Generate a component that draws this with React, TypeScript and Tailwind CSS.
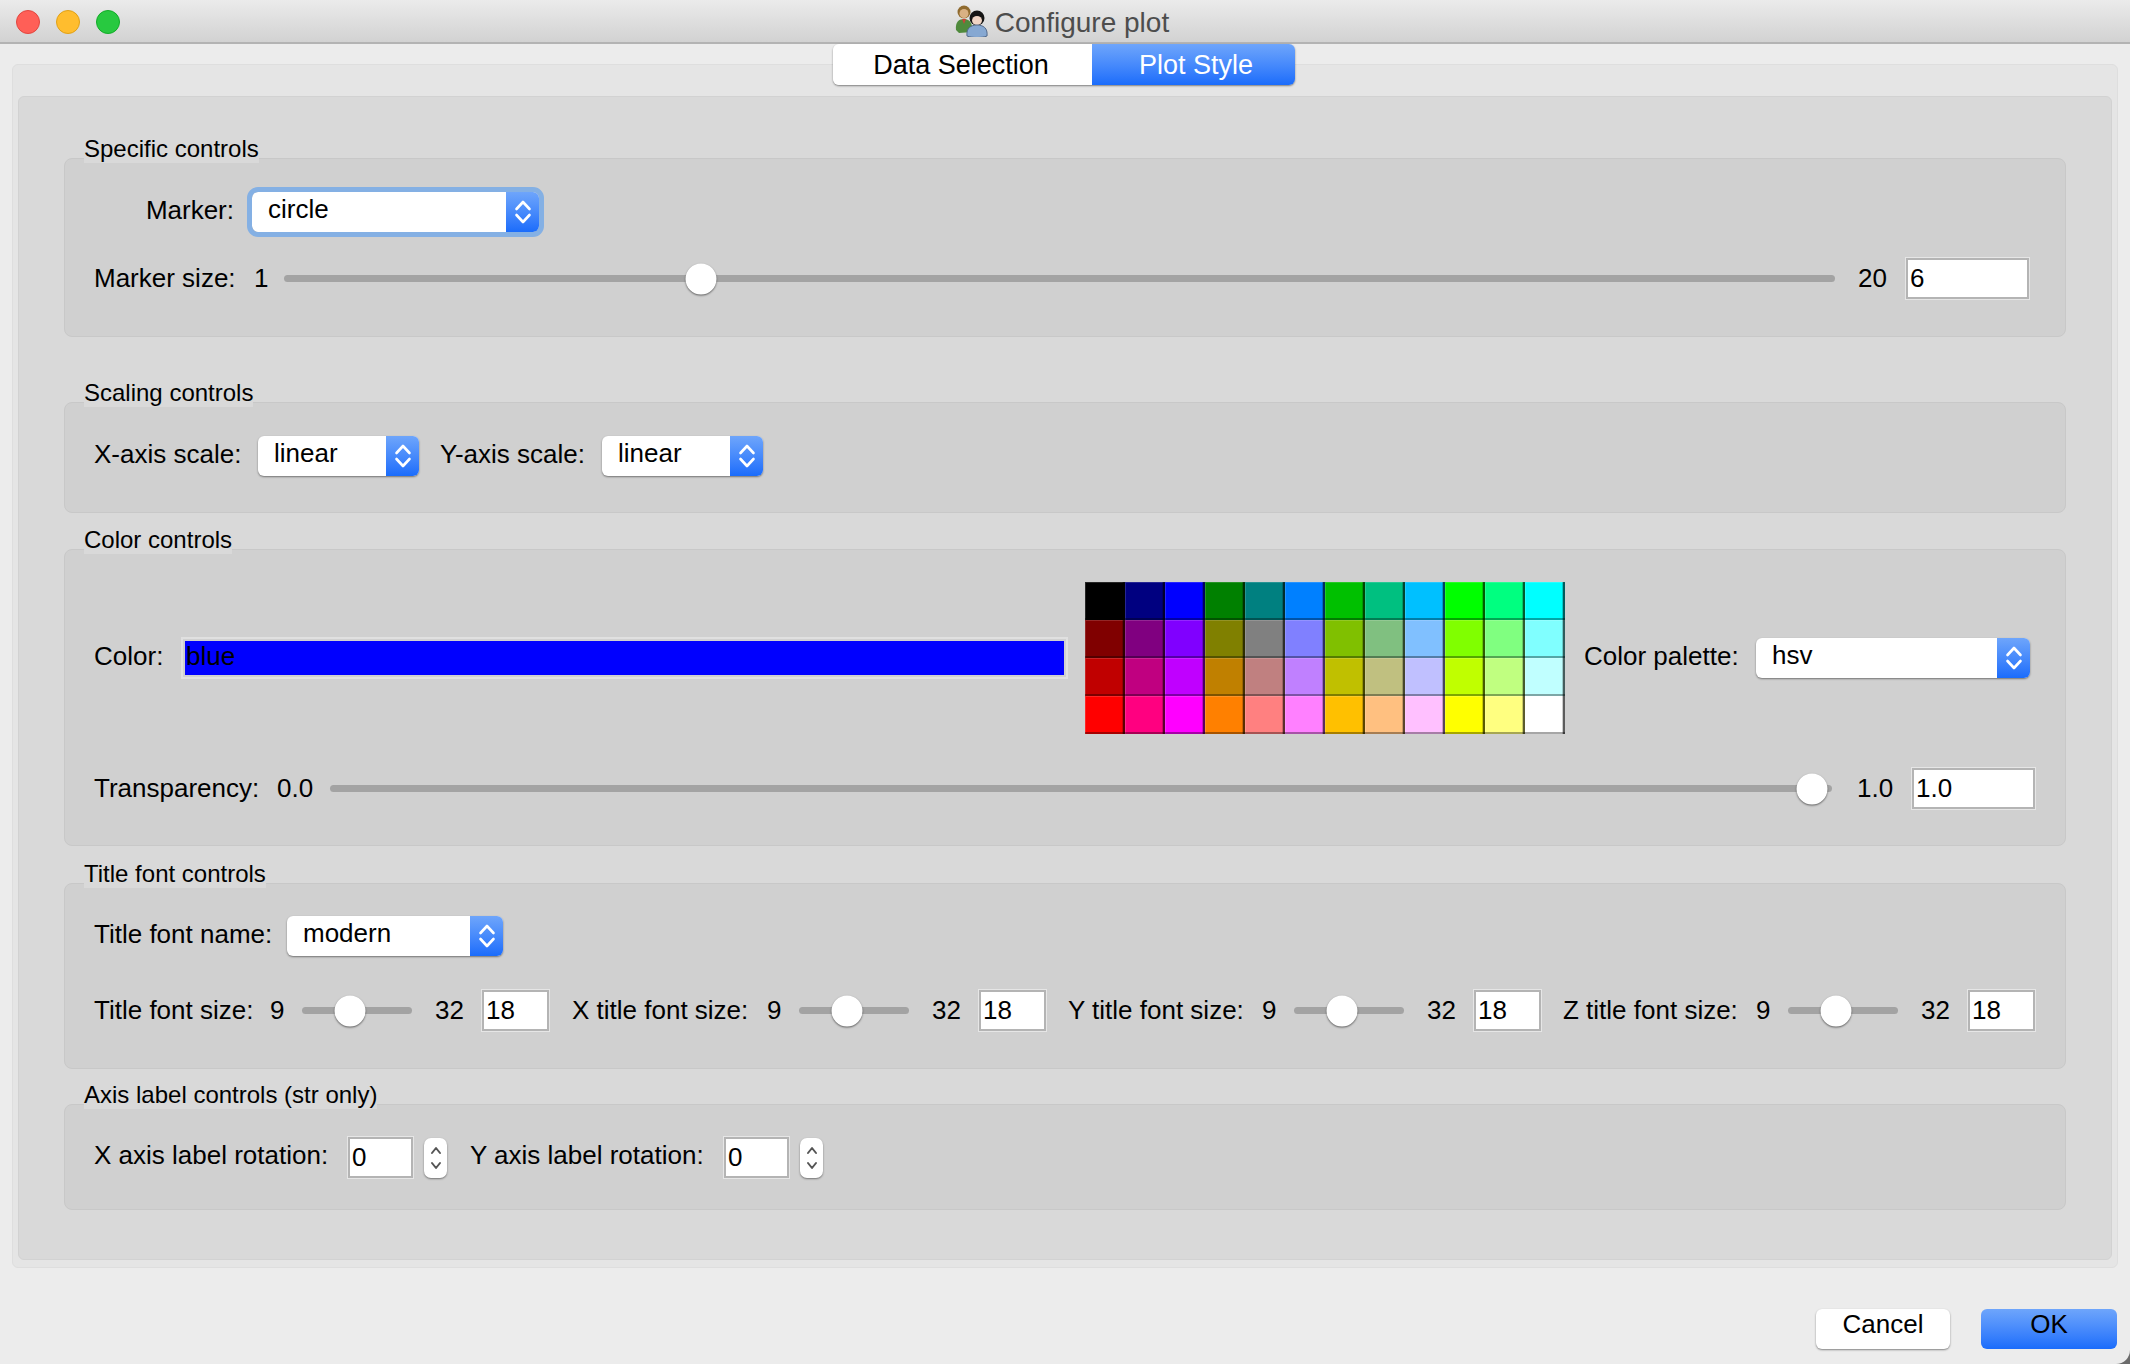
import React from 'react';

const PALETTE = [
  ['#000000', '#000080', '#0000ff', '#008000', '#008080', '#0080ff', '#00c000', '#00c080', '#00c0ff', '#00ff00', '#00ff80', '#00ffff'],
  ['#800000', '#800080', '#8000ff', '#808000', '#808080', '#8080ff', '#80c000', '#80c080', '#80c0ff', '#80ff00', '#80ff80', '#80ffff'],
  ['#c00000', '#c00080', '#c000ff', '#c08000', '#c08080', '#c080ff', '#c0c000', '#c0c080', '#c0c0ff', '#c0ff00', '#c0ff80', '#c0ffff'],
  ['#ff0000', '#ff0080', '#ff00ff', '#ff8000', '#ff8080', '#ff80ff', '#ffc000', '#ffc080', '#ffc0ff', '#ffff00', '#ffff80', '#ffffff'],
];

const Chevrons: React.FC = () => (
  <svg width="18" height="28" viewBox="0 0 18 28" fill="none" stroke="#fff" strokeWidth="2.6" strokeLinecap="round" strokeLinejoin="round">
    <path d="M2.5 11 L9 4 L15.5 11" />
    <path d="M2.5 17 L9 24 L15.5 17" />
  </svg>
);

const Select: React.FC<{ value: string; className: string; focused?: boolean }> = ({ value, className, focused }) => (
  <div className={`flex h-[40px] overflow-hidden rounded-[6px] bg-white shadow-[0_1px_2px_rgba(0,0,0,0.45)] ${focused ? 'outline-[5px] outline-[#84b0e4]' : ''} ${className}`}>
    <div className="flex-1 pl-[16px] text-left leading-[34px]">{value}</div>
    <div className="flex w-[33px] items-center justify-center bg-gradient-to-b from-[#6ea5fb] to-[#1a6cfb]">
      <Chevrons />
    </div>
  </div>
);

const Slider: React.FC<{ pct: number; className: string }> = ({ pct, className }) => (
  <div className={`relative h-[7px] rounded-full bg-[#a3a3a3] ${className}`}>
    <div
      className="absolute top-1/2 h-[31px] w-[31px] -translate-x-1/2 -translate-y-1/2 rounded-full bg-white shadow-[0_1px_2px_rgba(0,0,0,0.55)]"
      style={{ left: `${pct}%` }}
    />
  </div>
);

const NumInput: React.FC<{ value: string; className: string }> = ({ value, className }) => (
  <div className={`h-[41px] border-[2px] border-[#b4b4b4] bg-white pl-[2px] text-left leading-[36px] shadow-[0_0_0_1px_#e6e6e6] ${className}`}>{value}</div>
);

const Spinner: React.FC<{ className?: string }> = ({ className }) => (
  <div className={`flex h-[40px] w-[23px] items-center justify-center rounded-[7px] bg-white shadow-[0_1px_2px_rgba(0,0,0,0.45)] ${className ?? ''}`}>
    <svg width="14" height="30" viewBox="0 0 14 30" fill="none" stroke="#555" strokeWidth="2" strokeLinecap="round" strokeLinejoin="round">
      <path d="M3 10 L7 5 L11 10" />
      <path d="M3 20 L7 25 L11 20" />
    </svg>
  </div>
);

const Group: React.FC<{ title: string; className: string; children: React.ReactNode }> = ({ title, className, children }) => (
  <section className={`relative rounded-[8px] border border-[#c8c8c8] bg-[#d0d0d0] pl-[29px] ${className}`}>
    <div className="absolute left-[19px] top-[-23px] h-[27px] bg-[#d9d9d9] text-[24px] leading-[26px]">{title}</div>
    {children}
  </section>
);

const FontSize: React.FC<{ label: string; labelClass: string; className?: string }> = ({ label, labelClass, className }) => (
  <div className={`flex items-center ${className ?? ''}`}>
    <span className={labelClass}>{label}</span>
    <span className="w-[32px]">9</span>
    <Slider pct={44} className="w-[110px]" />
    <span className="ml-[23px] w-[47px]">32</span>
    <NumInput value="18" className="w-[67px]" />
  </div>
);

const People: React.FC = () => (
  <svg width="38" height="32" viewBox="0 0 38 32">
    <circle cx="10" cy="7" r="6.5" fill="#8f6a2e" />
    <circle cx="10" cy="8.5" r="4.5" fill="#d9b184" />
    <path d="M2 25 C1 17 5 14 10 14 C15 14 19 17 18 27 L5 28 Z" fill="#4f8a3c" />
    <path d="M8 14 L10 19 L12 14 Z" fill="#c9433a" />
    <circle cx="23" cy="13" r="7.5" fill="#151515" />
    <ellipse cx="23" cy="15.5" rx="5" ry="4.5" fill="#f0d4c4" />
    <path d="M13 31 C12 23 17 20 23 20 C29 20 34 23 33 31 C28 33 18 33 13 31 Z" fill="#86a8d2" stroke="#52698a" strokeWidth="1" />
  </svg>
);

export default function App() {
  return (
    <div className="flex h-[1364px] w-[2130px] flex-col overflow-hidden bg-[#6b6b6b] font-['Liberation_Sans',Arial,sans-serif] text-[26px] text-black">
      <div className="rounded-br-[14px] flex h-full flex-col bg-[#ececec]">
        {/* title bar */}
        <header className="relative flex h-[44px] shrink-0 items-center justify-center border-b-2 border-[#b3b3b3] bg-gradient-to-b from-[#ebebeb] to-[#d2d2d2]">
          <div className="absolute left-[16px] top-[10px] flex gap-[16px]">
            <div className="h-[24px] w-[24px] rounded-full border border-[#e2463f] bg-[#ff5f57]" />
            <div className="h-[24px] w-[24px] rounded-full border border-[#e1a116] bg-[#ffbd2e]" />
            <div className="h-[24px] w-[24px] rounded-full border border-[#12ac28] bg-[#28c940]" />
          </div>
          <div className="mr-[7px] flex h-[42px] items-center gap-[3px] text-[28px] text-[#4d4d4d]">
            <People />
            <span className="pt-[3px] leading-[36px]">Configure plot</span>
          </div>
        </header>

        {/* tab pane */}
        <div className="relative mx-[12px] mt-[20px] h-[1204px] rounded-[6px] border border-[#dedede] bg-[#e5e5e5] px-[5px] pt-[31px]">
          <div className="absolute left-[820px] top-[-21px] z-10 flex h-[41px] w-[462px] overflow-hidden rounded-[6px] text-[27px] leading-[42px] shadow-[0_1px_2px_rgba(0,0,0,0.45)]">
            <div className="w-[259px] bg-white pr-[3px] text-center">Data Selection</div>
            <div className="flex-1 bg-gradient-to-b from-[#6ea5fb] to-[#1a6cfb] pl-[5px] text-center text-white">Plot Style</div>
          </div>

          <div className="h-[1164px] rounded-[6px] border border-[#d2d2d2] bg-[#d9d9d9] pl-[45px] pr-[45px] pt-[61px]">
            <Group title="Specific controls" className="h-[179px] pt-[33px]">
              <div className="flex items-center">
                <span className="w-[140px] pb-[5px] text-right leading-[30px]">Marker:</span>
                <Select focused value="circle" className="ml-[18px] w-[287px]" />
              </div>
              <div className="mt-[26px] flex items-center">
                <span className="w-[160px]">Marker size:</span>
                <span className="w-[30px]">1</span>
                <Slider pct={26.9} className="w-[1551px]" />
                <span className="ml-[23px] w-[48px]">20</span>
                <NumInput value="6" className="h-[40px] w-[123px]" />
              </div>
            </Group>

            <Group title="Scaling controls" className="mt-[65px] h-[111px] pt-[33px]">
              <div className="flex items-center">
                <span className="w-[164px] pb-[5px] leading-[30px]">X-axis scale:</span>
                <Select value="linear" className="w-[161px]" />
                <span className="ml-[21px] w-[162px] pb-[5px] leading-[30px]">Y-axis scale:</span>
                <Select value="linear" className="w-[161px]" />
              </div>
            </Group>

            <Group title="Color controls" className="mt-[36px] h-[297px] pt-[32px]">
              <div className="flex items-center">
                <span className="w-[87px] pb-[4px] leading-[30px]">Color:</span>
                <div className="h-[42px] w-[887px] border-[2px] border-[#e0e0e0] p-[2px]">
                  <div className="h-full bg-[#0000ff] pl-[1px] leading-[30px]">blue</div>
                </div>
                <div className="ml-[17px] grid w-[480px] grid-cols-12">
                  {PALETTE.flat().map((c, i) => (
                    <div
                      key={i}
                      className="h-[38px] shadow-[inset_-2px_0_0_rgba(0,0,0,0.55),inset_-3px_0_0_rgba(0,0,0,0.2),inset_0_-2px_0_rgba(0,0,0,0.35),inset_1px_1px_0_rgba(255,255,255,0.15)]"
                      style={{ backgroundColor: c }}
                    />
                  ))}
                </div>
                <span className="ml-[19px] w-[172px] pb-[5px] leading-[30px]">Color palette:</span>
                <Select value="hsv" className="w-[274px]" />
              </div>
              <div className="mt-[34px] flex items-center">
                <span className="w-[183px]">Transparency:</span>
                <span className="w-[53px]">0.0</span>
                <Slider pct={98.7} className="w-[1502px]" />
                <span className="ml-[25px] w-[55px]">1.0</span>
                <NumInput value="1.0" className="w-[123px]" />
              </div>
            </Group>

            <Group title="Title font controls" className="mt-[37px] h-[186px] pt-[32px]">
              <div className="flex items-center">
                <span className="w-[193px] pb-[5px] leading-[30px]">Title font name:</span>
                <Select value="modern" className="w-[216px]" />
              </div>
              <div className="mt-[34px] flex items-center">
                <FontSize label="Title font size:" labelClass="w-[176px]" />
                <FontSize label="X title font size:" labelClass="w-[195px]" className="ml-[23px]" />
                <FontSize label="Y title font size:" labelClass="w-[194px]" className="ml-[22px]" />
                <FontSize label="Z title font size:" labelClass="w-[193px]" className="ml-[22px]" />
              </div>
            </Group>

            <Group title="Axis label controls (str only)" className="mt-[35px] h-[106px] pt-[32px]">
              <div className="flex items-center">
                <span className="w-[254px] pb-[5px] leading-[30px]">X axis label rotation:</span>
                <NumInput value="0" className="w-[65px]" />
                <Spinner className="ml-[11px]" />
                <span className="ml-[23px] w-[254px] pb-[5px] leading-[30px]">Y axis label rotation:</span>
                <NumInput value="0" className="w-[65px]" />
                <Spinner className="ml-[11px]" />
              </div>
            </Group>
          </div>
        </div>

        {/* dialog buttons */}
        <footer className="mt-[41px] flex justify-end gap-[31px] pr-[13px]">
          <button className="h-[40px] w-[134px] rounded-[6px] bg-white pb-[10px] leading-[26px] shadow-[0_1px_2px_rgba(0,0,0,0.45)]">Cancel</button>
          <button className="h-[40px] w-[136px] rounded-[6px] bg-gradient-to-b from-[#6ea5fb] to-[#1a6cfb] pb-[10px] leading-[26px]">OK</button>
        </footer>
      </div>
    </div>
  );
}
